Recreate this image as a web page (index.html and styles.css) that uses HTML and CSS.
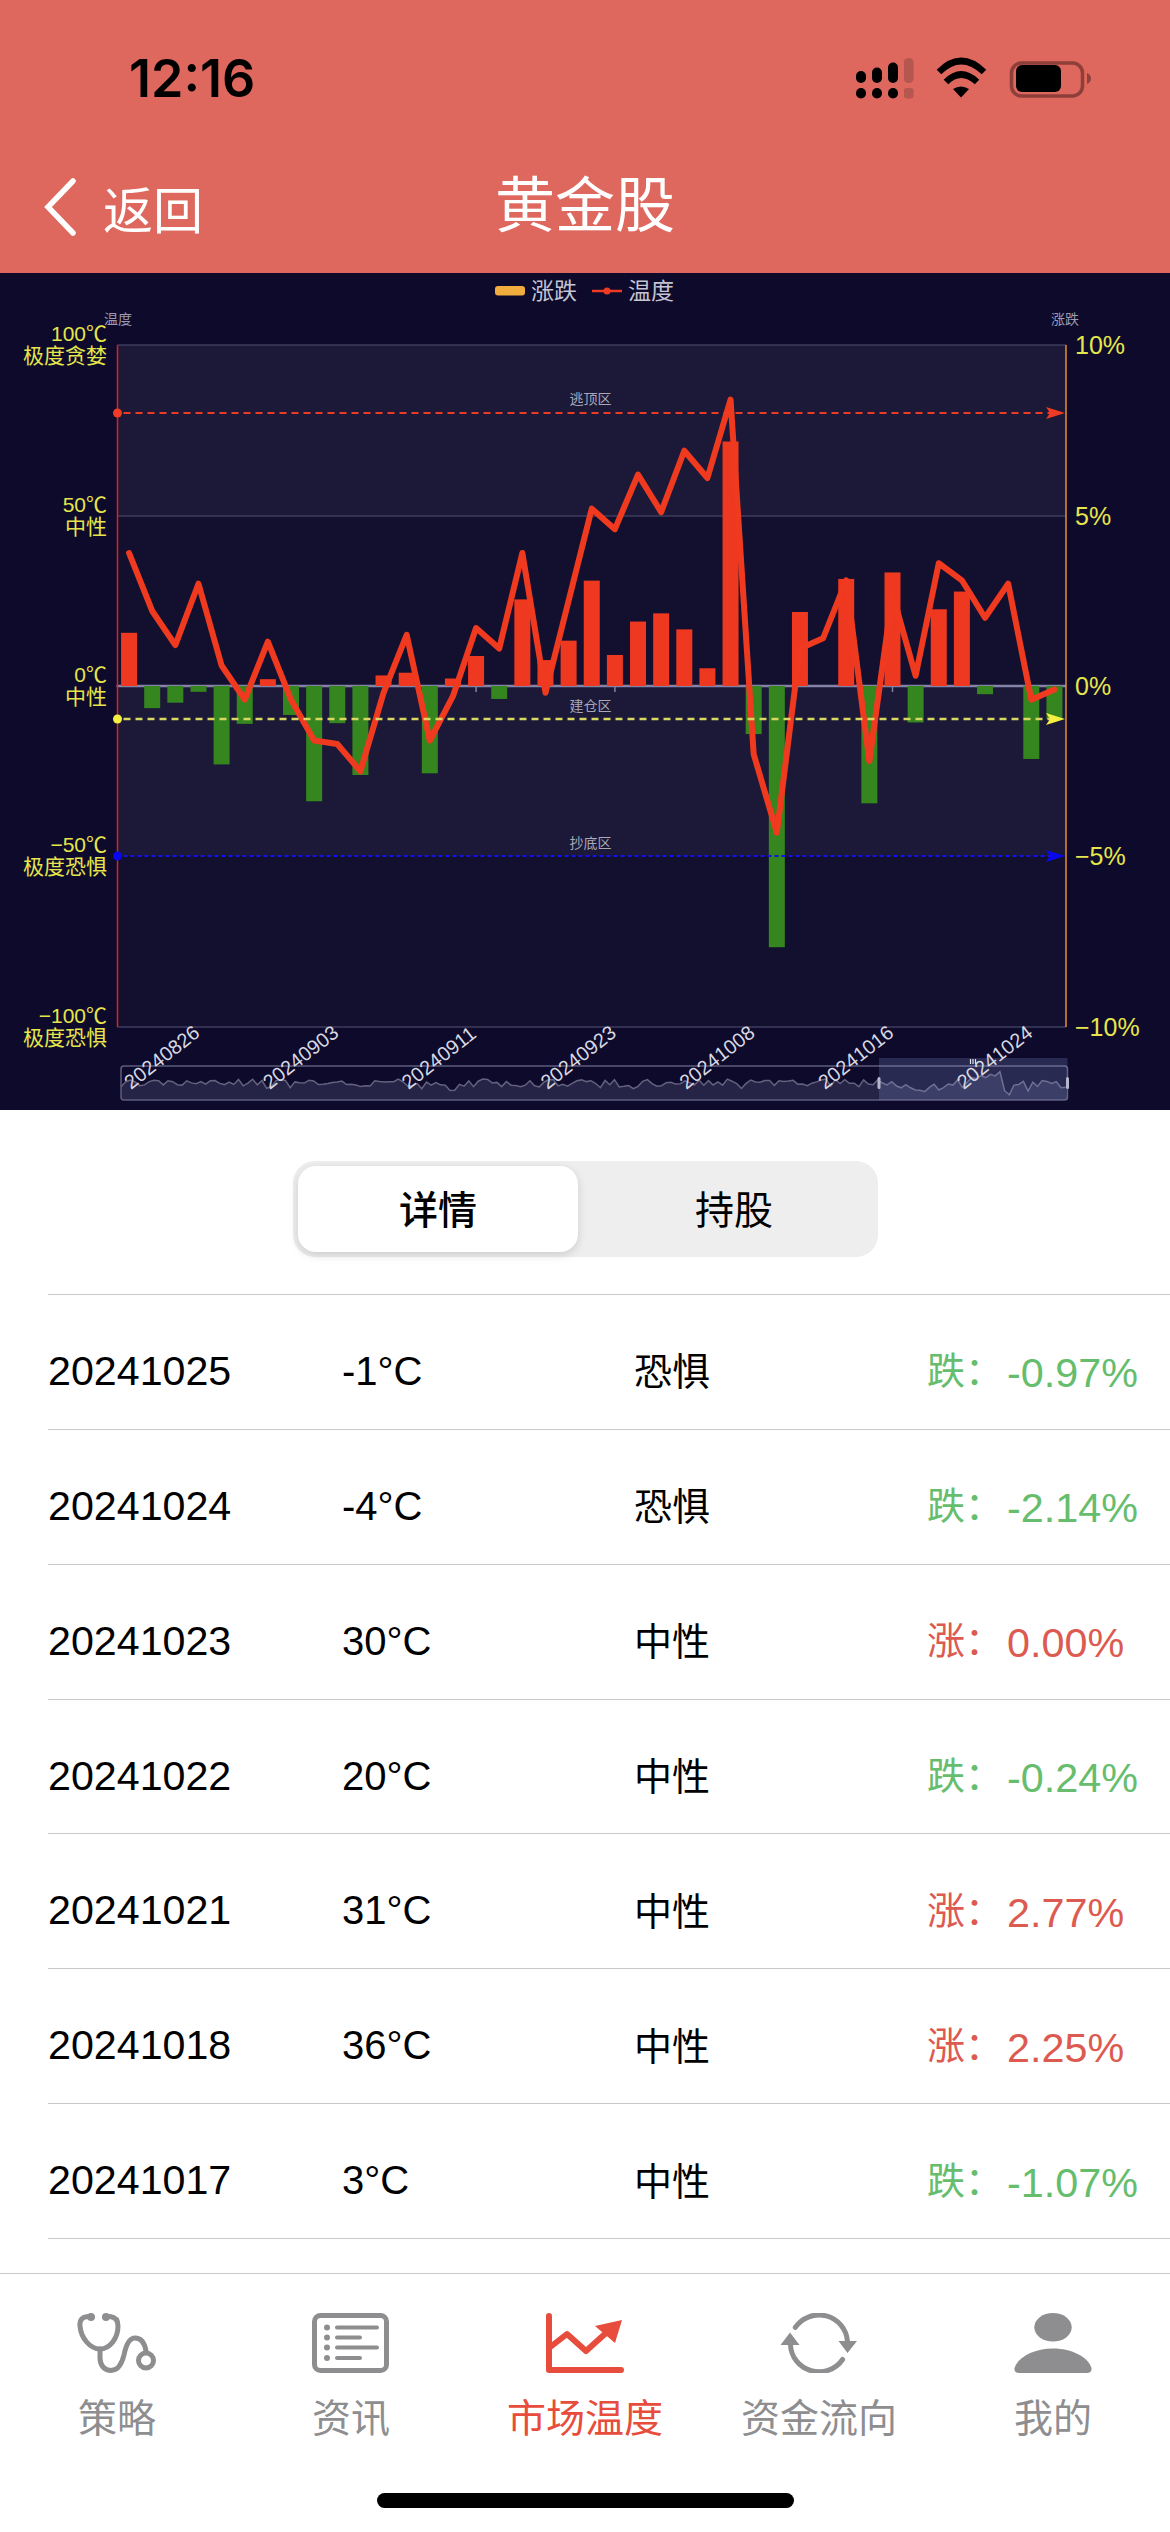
FILE: index.html
```html
<!DOCTYPE html>
<html lang="zh-CN">
<head>
  <meta charset="UTF-8" />
  <meta name="viewport" content="width=device-width, initial-scale=1.0">
  <title>黄金股</title>
  <link rel="stylesheet" href="styles.css">
</head>
<body>

  <!-- Header -->
  <header class="header">
    <div class="status-bar">
      <span class="time">12:16</span>
      <svg class="status-icons" viewBox="856 56 236 42" width="236" height="42">
        <g class="signal">
          <rect x="856" y="70" width="10" height="12" rx="5"/>
          <rect x="872" y="66.5" width="10" height="15.5" rx="5"/>
          <rect x="888" y="61.5" width="10" height="20.5" rx="5"/>
          <rect x="856" y="87" width="10" height="10.5" rx="5"/>
          <rect x="872" y="87" width="10" height="10.5" rx="5"/>
          <rect x="888" y="87" width="10" height="10.5" rx="5"/>
          <rect class="faded" x="904" y="57" width="9.5" height="25" rx="4.5"/>
          <rect class="faded" x="904" y="87" width="9.5" height="10.5" rx="3"/>
        </g>
        <g class="wifi">
          <path d="M939 71 Q961 49 984 71"/>
          <path d="M946 81 Q961 66 977 81"/>
          <path class="wifi-dot" d="M953 88 Q961 83 969 88 L961 96.5 Z"/>
        </g>
        <rect class="battery-shell" x="1011.5" y="62" width="71" height="33" rx="10"/>
        <rect class="battery-level" x="1016" y="64" width="45" height="27" rx="6"/>
        <path class="battery-cap" d="M1087 72 Q1091 74 1091 77.5 Q1091 81 1087 83 Z"/>
      </svg>
    </div>
    <nav class="nav-bar">
      <div class="back">
        <svg class="back-icon" viewBox="0 0 34 58" width="34" height="58"><path d="M30 3 L5 29 L30 55"/></svg>
        <span>返回</span>
      </div>
      <h1 class="title">黄金股</h1>
    </nav>
  </header>

  <!-- Chart, drawn by chart.js -->
  <section class="chart-panel">
    <svg id="chart" class="chart" viewBox="0 273 1170 837" width="1170" height="837"></svg>
  </section>

  <!-- Segment -->
  <div class="segment">
    <div class="segment-item active">详情</div>
    <div class="segment-item">持股</div>
  </div>

  <!-- Daily rows -->
  <div class="rows">
    <div class="row"><span class="date">20241025</span><span>-1°C</span><span class="mood">恐惧</span><span class="change down"><i>跌：</i>-0.97%</span></div>
    <div class="row"><span class="date">20241024</span><span>-4°C</span><span class="mood">恐惧</span><span class="change down"><i>跌：</i>-2.14%</span></div>
    <div class="row"><span class="date">20241023</span><span>30°C</span><span class="mood">中性</span><span class="change up"><i>涨：</i>0.00%</span></div>
    <div class="row"><span class="date">20241022</span><span>20°C</span><span class="mood">中性</span><span class="change down"><i>跌：</i>-0.24%</span></div>
    <div class="row"><span class="date">20241021</span><span>31°C</span><span class="mood">中性</span><span class="change up"><i>涨：</i>2.77%</span></div>
    <div class="row"><span class="date">20241018</span><span>36°C</span><span class="mood">中性</span><span class="change up"><i>涨：</i>2.25%</span></div>
    <div class="row"><span class="date">20241017</span><span>3°C</span><span class="mood">中性</span><span class="change down"><i>跌：</i>-1.07%</span></div>
  </div>

  <!-- Tab bar -->
  <footer class="tab-bar">
    <div class="tabs">
      <div class="tab">
        <svg class="tab-icon" viewBox="0 0 80 60" width="80" height="60">
          <g class="stroke-icon">
            <path d="M11 3.5 C5 4 2.5 7 3 13 C4 25 13 36 23 36 C33 36 41 25 41 13 C41 7 38 4 33 3.5"/>
            <path d="M23 36 V45 C23 53 28 57.5 34 57.5 C42 57.5 45 50 47 42 C49 32 52 25 58 25 C65 25 68 32 69 38"/>
            <circle cx="69" cy="47.5" r="7.5"/>
          </g>
          <circle class="fill-icon" cx="14" cy="4" r="4"/>
          <circle class="fill-icon" cx="29" cy="4" r="4"/>
        </svg>
        <span>策略</span>
      </div>
      <div class="tab">
        <svg class="tab-icon" viewBox="0 0 78 60" width="78" height="60">
          <rect class="stroke-icon" x="2.5" y="2.5" width="72" height="55" rx="6"/>
          <circle class="fill-icon" cx="15" cy="14.5" r="3"/>
          <circle class="fill-icon" cx="15" cy="24.5" r="3"/>
          <circle class="fill-icon" cx="15" cy="34.5" r="3"/>
          <circle class="fill-icon" cx="15" cy="45" r="3"/>
          <path class="stroke-icon thin" d="M25 14.5 H65 M25 24.5 H48 M25 34.5 H65 M25 45 H48"/>
        </svg>
        <span>资讯</span>
      </div>
      <div class="tab active">
        <svg class="tab-icon" viewBox="0 0 78 60" width="78" height="60">
          <path class="stroke-icon" d="M3 3 V57 H75"/>
          <path class="stroke-icon" d="M3 35 L21 21 L40 38 L60 20"/>
          <path class="fill-icon" d="M49 13 L76 7 L69 30 Z"/>
        </svg>
        <span>市场温度</span>
      </div>
      <div class="tab">
        <svg class="tab-icon" viewBox="0 0 78 60" width="78" height="60">
          <g class="stroke-icon">
            <path d="M15.3 14.4 A28.5 28 0 0 1 67.4 28"/>
            <path d="M62.6 46.5 A28.5 28 0 0 1 10.5 32"/>
          </g>
          <path class="fill-icon" d="M58.5 28 H77 L67.5 40 Z"/>
          <path class="fill-icon" d="M0.5 32 H19.5 L10 19.5 Z"/>
        </svg>
        <span>资金流向</span>
      </div>
      <div class="tab">
        <svg class="tab-icon" viewBox="0 0 78 60" width="78" height="60">
          <ellipse class="fill-icon" cx="39" cy="14.3" rx="18.7" ry="14.3"/>
          <path class="fill-icon" d="M0.5 55 C4 44 20 35.5 39 35.5 C58 35.5 74 44 77.5 55 C78 58 76 60 73 60 H5 C2 60 0 58 0.5 55 Z"/>
        </svg>
        <span>我的</span>
      </div>
    </div>
    <div class="home-indicator"></div>
  </footer>

  <script src="chart.js"></script>
</body>
</html>
```

FILE: styles.css
```css
* { box-sizing: border-box; }
body { margin:0; width:1170px; height:2532px; display:flex; flex-direction:column; background:#fff; font-family:"Liberation Sans","Noto Sans CJK SC",sans-serif; color:#000; overflow:hidden; }

/* header */
.header { height:273px; background:#de675e; color:#fff; }
.status-bar { height:156px; display:flex; justify-content:space-between; align-items:center; padding:0 78px 0 129px; }
.time { font-family:Inter,sans-serif; font-size:52px; font-weight:600; color:#000; }
.status-icons { display:block; }
.signal rect { fill:#000; }
.signal .faded { fill:#b5564f; }
.wifi path { fill:none; stroke:#000; stroke-width:6.5; }
.wifi .wifi-dot { fill:#000; stroke:none; }
.battery-shell { fill:none; stroke:#8f3f39; stroke-width:3.5; }
.battery-level { fill:#000; }
.battery-cap { fill:#8f3f39; }

.nav-bar { height:117px; display:grid; grid-template-columns:1fr auto 1fr; align-items:center; padding-bottom:22px; }
.back { display:flex; align-items:center; gap:26px; padding:6px 0 0 43px; font-size:50px; font-family:"Noto Sans CJK SC",sans-serif; }
.back-icon { display:block; fill:none; stroke:#fff; stroke-width:5.5; stroke-linecap:round; }
.title { grid-column:2; margin:0; padding-bottom:6px; font-size:60px; font-weight:400; font-family:"Noto Sans CJK SC",sans-serif; }

/* chart */
.chart-panel { height:837px; background:#0d0a2b; }
.chart { display:block; }
.band-a { fill:#1b1937; }
.band-b { fill:#12102e; }
.split { stroke:#3e3c5e; stroke-width:1.5; }
.zero { stroke:#8482a6; stroke-width:2.5; }
.tick { stroke:#8482a6; stroke-width:1.5; }
.axis-left { stroke:#e0201a; stroke-width:1.5; }
.axis-right { stroke:#e8902c; stroke-width:1.5; }
.bar-up { fill:#ef3820; }
.bar-down { fill:#35861e; }
.temp-line { fill:none; stroke:#f03a20; stroke-width:6; stroke-linejoin:round; stroke-linecap:round; }
.mark { stroke-width:2; stroke-dasharray:7 5; }
.mark-red { stroke:#ef3a24; }
.mark-yellow { stroke:#d8d860; stroke-width:2.5; }
.mark-blue { stroke:#1212e8; stroke-dasharray:4 3; }
.fill-red { fill:#ef3a24; }
.fill-yellow { fill:#f4f040; }
.fill-blue { fill:#0808f0; }
.chart text { font-family:"Liberation Sans","Noto Sans CJK SC",sans-serif; }
.legend-text { fill:#c4c4d2; font-size:23px; }
.axis-name { fill:#9c9cb0; font-size:14px; }
.mark-label { fill:#a8a8b8; font-size:14px; text-anchor:middle; }
.temp-label { fill:#e6e64c; font-size:21px; text-anchor:end; }
.pct-label { fill:#e6e64c; font-size:25px; }
.date-label { fill:#d8d8e2; font-size:20px; }
.legend-bar { fill:#f0ac3c; }
.legend-line { stroke:#ef3a24; stroke-width:2.5; }
.zoom-box { fill:none; stroke:#5e5c7c; stroke-width:1.5; }
.zoom-area { fill:rgba(170,170,210,0.16); }
.zoom-line { fill:none; stroke:#64627f; stroke-width:1.5; }
.zoom-window { fill:rgba(150,170,235,0.2); }
.zoom-handle { fill:#b4b8cc; }
.zoom-grip { stroke:#e4e4ec; stroke-width:1.2; }

/* segment */
.segment { width:585px; height:96px; margin:51px 0 37px 293px; padding:5px 4px 5px 5px; display:grid; grid-template-columns:280px 1fr; background:#eee; border-radius:22px; font-family:"Noto Sans CJK SC",sans-serif; font-size:39px; }
.segment-item { display:flex; align-items:center; justify-content:center; padding:0 0 5px 16px; }
.segment-item.active { padding-left:0; background:#fff; border-radius:18px; font-weight:500; box-shadow:0 3px 10px rgba(0,0,0,0.14); }

/* rows */
.rows { margin-left:48px; border-top:1.5px solid #c9c9c9; }
.row { height:134.86px; padding-top:19px; display:grid; grid-template-columns:294px 292px 293px 1fr; align-items:center; border-bottom:1.5px solid #c9c9c9; font-size:40px; }
.date { font-size:41.2px; }
.mood { padding-bottom:5px; font-family:"Noto Sans CJK SC",sans-serif; font-size:38px; }
.change { padding-bottom:5px; font-size:41.3px; }
.change i { margin-right:4px; vertical-align:3px; font-style:normal; font-family:"Noto Sans CJK SC",sans-serif; font-size:38px; }
.change.down { color:#66bd6d; }
.change.up { color:#dc5a50; }

/* tab bar */
.tab-bar { position:fixed; left:0; right:0; bottom:0; height:259px; background:#fff; border-top:1.5px solid #c9c9c9; padding-top:38.5px; display:flex; flex-direction:column; }
.tabs { display:grid; grid-template-columns:repeat(5,234px); }
.tab { display:flex; flex-direction:column; align-items:center; gap:14px; font-family:"Noto Sans CJK SC",sans-serif; font-size:39px; line-height:56px; color:#8e8e90; }
.tab.active { color:#e74c3c; }
.tab-icon { display:block; }
.stroke-icon { fill:none; stroke:#8e8e90; stroke-width:5; stroke-linecap:round; stroke-linejoin:round; }
.stroke-icon.thin { stroke-width:4; }
.fill-icon { fill:#8e8e90; }
.tab.active .stroke-icon { stroke:#e74c3c; stroke-width:6; }
.tab.active .fill-icon { fill:#e74c3c; }
.home-indicator { width:417px; height:15px; margin:50px auto 0; background:#000; border-radius:8px; }
```

FILE: chart.js
```js
// Rise/fall (%) and temperature per trading day, 41 days in the window
const rise = [1.56,-0.65,-0.49,-0.17,-2.3,-1.11,0.2,-0.85,-3.38,-1.09,-2.61,0.31,0.39,-2.56,0.22,0.88,-0.38,2.54,0.76,1.33,3.09,0.91,1.89,2.13,1.66,0.52,7.17,-1.41,-7.66,2.17,0,3.14,-3.44,3.33,-1.07,2.25,2.77,-0.24,0,-2.14,-0.97];
const temps = [39,22,12,30,6,-4,13,-4,-16,-17,-25,-2,15,-16,-3,17,11,39,-2,25,52,46,62,51,69,61,84,-20,-43,11,14,31,-22,27,3,36,31,20,30,-4,-1];
const dates = ['20240826','20240903','20240911','20240923','20241008','20241016','20241024'];

const plotLeft = 117.5, plotRight = 1066, plotTop = 345, plotBottom = 1027, zero = 686;
const plotWidth = plotRight - plotLeft;
const step = plotWidth / 41;
const catX = (i) => plotLeft + step * (i + 0.5);
const pctY = (v) => zero - v * 34.1;
const tempY = (t) => zero - t * 3.41;

let svg = '';

// legend
svg += '<rect class="legend-bar" x="495" y="286" width="30" height="9.5" rx="3"/>';
svg += '<text class="legend-text" x="531" y="299">涨跌</text>';
svg += '<line class="legend-line" x1="592" x2="622" y1="291" y2="291"/><circle class="fill-red" cx="607" cy="291" r="3.5"/>';
svg += '<text class="legend-text" x="628" y="299">温度</text>';
svg += '<text class="axis-name" x="104" y="324">温度</text>';
svg += '<text class="axis-name" x="1051" y="324">涨跌</text>';

// plot bands and grid
svg += `<rect class="band-a" x="${plotLeft}" y="${plotTop}" width="${plotWidth}" height="171"/>`;
svg += `<rect class="band-b" x="${plotLeft}" y="516" width="${plotWidth}" height="170"/>`;
svg += `<rect class="band-a" x="${plotLeft}" y="686" width="${plotWidth}" height="170"/>`;
svg += `<rect class="band-b" x="${plotLeft}" y="856" width="${plotWidth}" height="171"/>`;
[plotTop, 516, plotBottom].forEach((y) => {
  svg += `<line class="split" x1="${plotLeft}" x2="${plotRight}" y1="${y}" y2="${y}"/>`;
});
svg += `<line class="zero" x1="${plotLeft - 1}" x2="${plotRight}" y1="${zero}" y2="${zero}"/>`;
[15, 21, 33].forEach((i) => {
  svg += `<line class="tick" x1="${catX(i)}" x2="${catX(i)}" y1="${zero}" y2="${zero + 6}"/>`;
});
svg += `<line class="axis-left" x1="${plotLeft}" x2="${plotLeft}" y1="${plotTop}" y2="${plotBottom}"/>`;
svg += `<line class="axis-right" x1="${plotRight}" x2="${plotRight}" y1="${plotTop}" y2="${plotBottom}"/>`;

// axis labels
const tempLabels = [['100℃', '极度贪婪', plotTop], ['50℃', '中性', 516], ['0℃', '中性', zero], ['−50℃', '极度恐惧', 856], ['−100℃', '极度恐惧', plotBottom]];
tempLabels.forEach(([a, b, y]) => {
  svg += `<text class="temp-label" x="107" y="${y - 4}">${a}</text><text class="temp-label" x="107" y="${y + 18}">${b}</text>`;
});
[['10%', plotTop], ['5%', 516], ['0%', zero], ['−5%', 856], ['−10%', plotBottom]].forEach(([t, y]) => {
  svg += `<text class="pct-label" x="1075" y="${y + 9}">${t}</text>`;
});

// bars
rise.forEach((v, i) => {
  if (v === 0) return;
  const y = pctY(Math.max(v, 0));
  svg += `<rect class="${v > 0 ? 'bar-up' : 'bar-down'}" x="${catX(i) - 8}" y="${y}" width="16" height="${Math.abs(v) * 34.1}"/>`;
});

// temperature line
svg += `<polyline class="temp-line" points="${temps.map((t, i) => catX(i) + ',' + tempY(t)).join(' ')}"/>`;

// mark lines
[['red', 413, '逃顶区', 404], ['yellow', 719, '建仓区', 711], ['blue', 856, '抄底区', 848]].forEach(([c, y, label, ly]) => {
  svg += `<line class="mark mark-${c}" x1="${plotLeft + 6}" x2="1050" y1="${y}" y2="${y}"/>`;
  svg += `<circle class="fill-${c}" cx="${plotLeft}" cy="${y}" r="4.5"/>`;
  svg += `<path class="fill-${c}" d="M1065 ${y} L1046 ${y - 6} L1050 ${y} L1046 ${y + 6} Z"/>`;
  svg += `<text class="mark-label" x="590.5" y="${ly}">${label}</text>`;
});

// data zoom slider: the older part is filler, the last 41 points are the chart's own
let seed = 4711;
const rand = () => (seed = (seed * 16807) % 2147483647) / 2147483647;
const older = [];
for (let i = 0; i < 161; i++) older.push(22 + (rand() - 0.5) * 44 - (rand() > 0.9 ? 18 : 0));
const series = older.concat(temps);
const zoomPts = series.map((t, i) => (121 + i * 4.7).toFixed(1) + ',' + (1071.7 + (84 - t) * 0.183).toFixed(1));
svg += `<path class="zoom-area" d="M121 1100 L${zoomPts.join(' L')} L1067 1100 Z"/>`;
svg += `<polyline class="zoom-line" points="${zoomPts.join(' ')}"/>`;
svg += '<rect class="zoom-box" x="121" y="1066" width="946.5" height="34" rx="3"/>';
svg += '<rect class="zoom-window" x="879" y="1058" width="188.5" height="42"/>';
svg += '<rect class="zoom-handle" x="877.5" y="1077" width="3" height="12" rx="1.5"/><rect class="zoom-handle" x="1066" y="1077" width="3" height="12" rx="1.5"/>';
svg += '<path class="zoom-grip" d="M970.5 1059 V1064 M973 1059 V1064 M975.5 1059 V1064"/>';

// date labels
dates.forEach((d, i) => {
  const x = 131 + i * 138.8;
  svg += `<text class="date-label" x="${x}" y="1090" transform="rotate(-38 ${x} 1090)">${d}</text>`;
});

document.getElementById('chart').innerHTML = svg;
```
